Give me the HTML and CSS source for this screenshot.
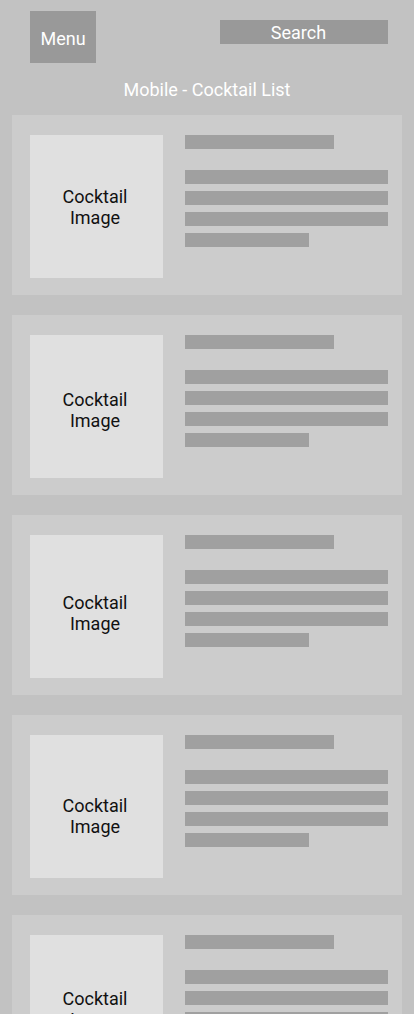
FILE: index.html
```html
<!DOCTYPE html>
<html>
<head>
<meta charset="utf-8">
<link rel="stylesheet" href="styles.css">
</head>
<body>
<header class="top">
  <div class="menu">Menu</div>
  <div class="search">Search</div>
</header>
<h1 class="title">Mobile - Cocktail List</h1>
<main class="list">
  <section class="card">
    <div class="thumb"><span class="label">Cocktail<br>Image</span></div>
    <div class="info">
      <div class="bar bar-title"></div>
      <div class="bar"></div>
      <div class="bar"></div>
      <div class="bar"></div>
      <div class="bar bar-short"></div>
    </div>
  </section>
  <section class="card card-b">
    <div class="thumb"><span class="label">Cocktail<br>Image</span></div>
    <div class="info">
      <div class="bar bar-title"></div>
      <div class="bar"></div>
      <div class="bar"></div>
      <div class="bar"></div>
      <div class="bar bar-short"></div>
    </div>
  </section>
  <section class="card card-c">
    <div class="thumb"><span class="label">Cocktail<br>Image</span></div>
    <div class="info">
      <div class="bar bar-title"></div>
      <div class="bar"></div>
      <div class="bar"></div>
      <div class="bar"></div>
      <div class="bar bar-short"></div>
    </div>
  </section>
  <section class="card card-d">
    <div class="thumb"><span class="label">Cocktail<br>Image</span></div>
    <div class="info">
      <div class="bar bar-title"></div>
      <div class="bar"></div>
      <div class="bar"></div>
      <div class="bar"></div>
      <div class="bar bar-short"></div>
    </div>
  </section>
  <section class="card card-e">
    <div class="thumb"><span class="label">Cocktail<br>Image</span></div>
    <div class="info">
      <div class="bar bar-title"></div>
      <div class="bar"></div>
      <div class="bar"></div>
      <div class="bar"></div>
      <div class="bar bar-short"></div>
    </div>
  </section>
</main>
</body>
</html>
```
FILE: styles.css
```css
html, body {
  margin: 0;
  padding: 0;
}
body {
  background: #c2c2c2;
  font-family: Roboto, "Liberation Sans", sans-serif;
  overflow: hidden;
  height: 1014px;
}
.top {
  display: flex;
  justify-content: space-between;
  align-items: flex-start;
  padding: 11px 26px 0 30px;
}
.menu {
  width: 66px;
  height: 52px;
  background: #999999;
  color: #ffffff;
  font-size: 18px;
  display: flex;
  align-items: center;
  justify-content: center;
  padding-top: 2px;
  box-sizing: border-box;
}
.search {
  margin-top: 9px;
  width: 168px;
  height: 24px;
  box-sizing: border-box;
  padding: 1px 11px 0 0;
  background: #999999;
  color: #ffffff;
  font-size: 18px;
  line-height: 24px;
  text-align: center;
}
.title {
  margin: 17px 0 0;
  height: 20px;
  line-height: 20px;
  font-size: 18px;
  font-weight: 400;
  color: #ffffff;
  text-align: center;
}
.list {
  display: flex;
  flex-direction: column;
  gap: 20px;
  margin: 15px 12px 0;
}
.card {
  flex: none;
  height: 180px;
  background: #cccccc;
  display: flex;
  align-items: flex-start;
  padding: 20px 14px 0 18px;
  box-sizing: border-box;
}
.thumb {
  width: 133px;
  height: 143px;
  flex: none;
  background: #e0e0e0;
  color: #111111;
  font-size: 18px;
  line-height: 21px;
  display: flex;
  align-items: center;
  justify-content: center;
  text-align: center;
  padding-right: 3px;
  box-sizing: border-box;
}
.label {
  display: block;
}
.card-b .label { margin-top: 6px; }
.card-c .label { margin-top: 12px; }
.card-d .label { margin-top: 18px; }
.card-e .label { margin-top: 4px; }
.info {
  margin-left: 22px;
  width: 203px;
  display: flex;
  flex-direction: column;
  gap: 7px;
}
.bar {
  height: 14px;
  background: #a0a0a0;
}
.bar-title {
  width: 149px;
  margin-bottom: 14px;
}
.bar-short {
  width: 124px;
}
```
